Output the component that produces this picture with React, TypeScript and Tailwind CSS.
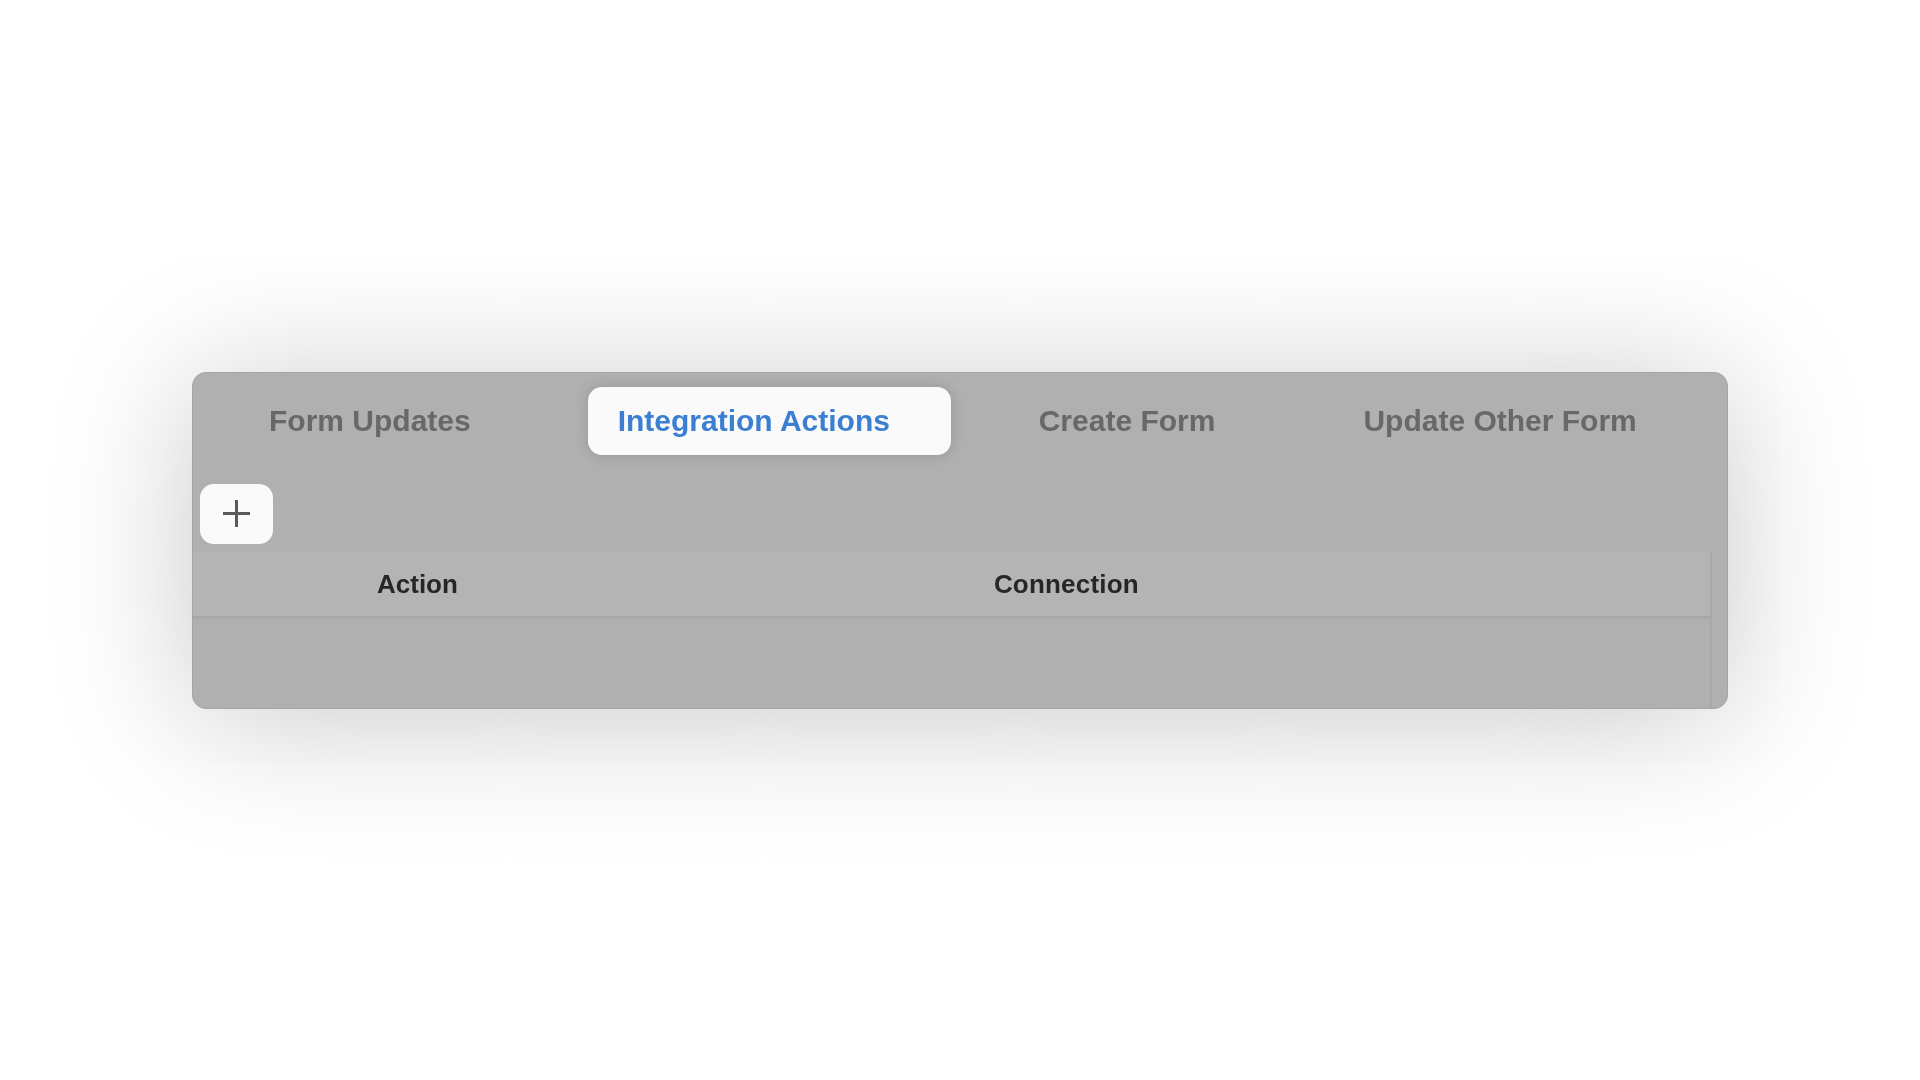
const tabFont = { fontFamily: '"Liberation Sans", Arial, sans-serif' };

function PlusIcon() {
  return (
    <svg width="31" height="31" viewBox="0 0 31 31" fill="none">
      <path d="M15.5 2v27M2 15.5h27" stroke="#5a5a5a" strokeWidth="3" strokeLinecap="butt" />
    </svg>
  );
}

export default function App() {
  return (
    <div className="min-h-screen w-full bg-white flex items-center justify-center" style={tabFont}>
      <div className="w-[1536px] h-[337px] rounded-[14px] bg-[#b0b0b0] border border-[#a5a5a5] shadow-[0_10px_140px_rgba(0,0,0,0.22)] flex flex-col overflow-hidden">
        {/* tabs */}
        <div className="flex items-center pt-[14px] h-[82px] blur-[0.6px]">
          <span className="ml-[76px] text-[30px] font-bold text-[#686868] leading-none">Form Updates</span>
          <button className="ml-[117px] w-[363px] h-[68px] rounded-[14px] bg-[#fafafa] shadow-[0_0_14px_rgba(0,0,0,0.15)] flex items-center pl-[30px]">
            <span className="text-[30px] font-bold text-[#3a7fd1] leading-none">Integration Actions</span>
          </button>
          <span className="ml-[88px] text-[30px] font-bold text-[#686868] leading-none">Create Form</span>
          <span className="ml-[148px] text-[30px] font-bold text-[#686868] leading-none">Update Other Form</span>
        </div>

        {/* add button */}
        <div className="pl-[7px] mt-[29px]">
          <button className="w-[73px] h-[60px] rounded-[14px] bg-[#fafafa] flex items-center justify-center blur-[0.5px]">
            <PlusIcon />
          </button>
        </div>

        {/* table */}
        <div className="mt-[8px] mr-[15px] flex-1 flex flex-col border-r-2 border-[#a8a8a8]">
          <div className="h-[67px] bg-[#b4b4b4] border-b-[3px] border-[#a8a8a8] flex items-center blur-[0.6px]">
            <span className="ml-[184px] text-[26px] font-bold text-[#262626] leading-none">Action</span>
            <span className="ml-[536px] text-[26px] font-bold text-[#262626] leading-none tracking-[0.2px]">Connection</span>
          </div>
          <div className="flex-1" />
        </div>
      </div>
    </div>
  );
}
